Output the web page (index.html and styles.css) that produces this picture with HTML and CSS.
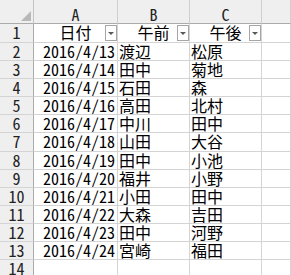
FILE: index.html
```html
<!DOCTYPE html>
<html lang="ja">
<head>
<meta charset="utf-8">
<link rel="stylesheet" href="styles.css">
</head>
<body>
<div class="sheet">
  <div class="corner"><span class="tri"></span></div>
  <div class="ch">A</div><div class="ch">B</div><div class="ch">C</div><div class="ch"></div>

  <div class="rh">1</div><div class="c hd">日付<span class="dd"></span></div><div class="c hd">午前<span class="dd"></span></div><div class="c hd">午後<span class="dd"></span></div><div class="c"></div>
  <div class="rh">2</div><div class="c date">2016/4/13</div><div class="c jp">渡辺</div><div class="c jp">松原</div><div class="c"></div>
  <div class="rh">3</div><div class="c date">2016/4/14</div><div class="c jp">田中</div><div class="c jp">菊地</div><div class="c"></div>
  <div class="rh">4</div><div class="c date">2016/4/15</div><div class="c jp">石田</div><div class="c jp">森</div><div class="c"></div>
  <div class="rh">5</div><div class="c date">2016/4/16</div><div class="c jp">高田</div><div class="c jp">北村</div><div class="c"></div>
  <div class="rh">6</div><div class="c date">2016/4/17</div><div class="c jp">中川</div><div class="c jp">田中</div><div class="c"></div>
  <div class="rh">7</div><div class="c date">2016/4/18</div><div class="c jp">山田</div><div class="c jp">大谷</div><div class="c"></div>
  <div class="rh">8</div><div class="c date">2016/4/19</div><div class="c jp">田中</div><div class="c jp">小池</div><div class="c"></div>
  <div class="rh">9</div><div class="c date">2016/4/20</div><div class="c jp">福井</div><div class="c jp">小野</div><div class="c"></div>
  <div class="rh">10</div><div class="c date">2016/4/21</div><div class="c jp">小田</div><div class="c jp">田中</div><div class="c"></div>
  <div class="rh">11</div><div class="c date">2016/4/22</div><div class="c jp">大森</div><div class="c jp">吉田</div><div class="c"></div>
  <div class="rh">12</div><div class="c date">2016/4/23</div><div class="c jp">田中</div><div class="c jp">河野</div><div class="c"></div>
  <div class="rh">13</div><div class="c date">2016/4/24</div><div class="c jp">宮崎</div><div class="c jp">福田</div><div class="c"></div>
  <div class="rh">14</div><div class="c"></div><div class="c"></div><div class="c"></div><div class="c"></div>
</div>
</body>
</html>
```

FILE: styles.css
```css
html, body {
  margin: 0;
  padding: 0;
  background: #ffffff;
  overflow: hidden;
}

.sheet {
  display: grid;
  grid-template-columns: 34px 84px 72px 72px 29px;
  grid-template-rows: 24px 19px repeat(5, 18px) 19px repeat(7, 18px);
  width: 291px;
  font-family: "Noto Sans Mono CJK JP", "Noto Sans CJK JP", "DejaVu Sans Mono", monospace;
  font-size: 16px;
}

.sheet > div {
  box-sizing: border-box;
  white-space: nowrap;
  overflow: hidden;
  position: relative;
  line-height: 17px;
}

.corner {
  background: #efefef;
  border-right: 1px solid #c4c4c4;
  border-bottom: 1px solid #ababab;
}

.tri {
  position: absolute;
  right: 2px;
  bottom: 2px;
  width: 0;
  height: 0;
  border-left: 10px solid transparent;
  border-bottom: 10px solid #b8b8b8;
}

.ch {
  background: #efefef;
  border-right: 1px solid #d0d0d0;
  border-bottom: 1px solid #ababab;
  color: #222;
  text-align: center;
  padding-top: 6px;
}

.rh {
  background: #efefef;
  border-right: 1px solid #ababab;
  border-bottom: 1px solid #d4d4d4;
  color: #222;
  text-align: center;
}

.c {
  border-right: 1px solid #d4d4d4;
  border-bottom: 1px solid #d4d4d4;
  color: #000;
}

.date {
  text-align: right;
  padding-right: 2px;
}

.jp {
  padding-left: 1px;
}

.hd {
  text-align: center;
}

.dd {
  position: absolute;
  right: 0;
  top: 1px;
  width: 12px;
  height: 16px;
  box-sizing: border-box;
  border: 1px solid #a6a6a6;
  background: #ffffff;
}

.dd::after {
  content: "";
  position: absolute;
  left: 2px;
  top: 6px;
  width: 0;
  height: 0;
  border-left: 3px solid transparent;
  border-right: 3px solid transparent;
  border-top: 3px solid #595959;
}
```
